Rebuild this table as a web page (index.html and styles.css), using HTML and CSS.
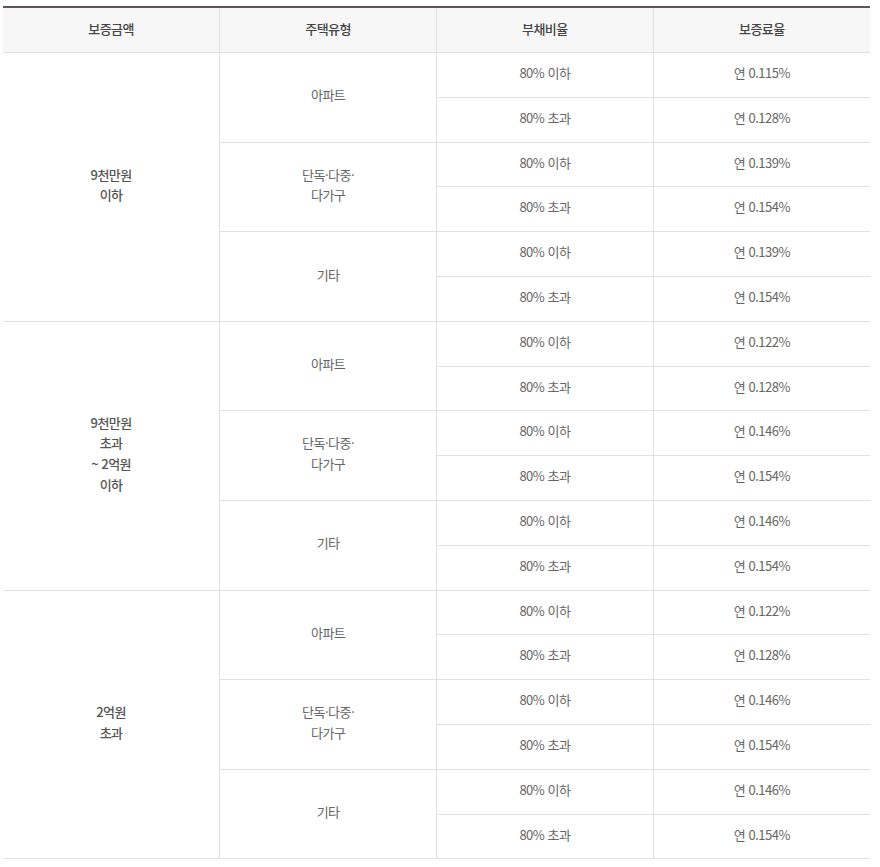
FILE: index.html
```html
<!DOCTYPE html>
<html lang="ko">
<head>
<meta charset="utf-8">
<link rel="stylesheet" href="styles.css">
</head>
<body>
<table class="rate-table">
  <colgroup><col><col><col><col></colgroup>
  <thead>
    <tr><th>보증금액</th><th>주택유형</th><th>부채비율</th><th>보증료율</th></tr>
  </thead>
  <tbody>
    <tr><td class="amt" rowspan="6">9천만원<br>이하</td><td rowspan="2">아파트</td><td>80% 이하</td><td>연 0.115%</td></tr>
    <tr><td>80% 초과</td><td>연 0.128%</td></tr>
    <tr><td rowspan="2">단독·다중·<br>다가구</td><td>80% 이하</td><td>연 0.139%</td></tr>
    <tr><td>80% 초과</td><td>연 0.154%</td></tr>
    <tr><td rowspan="2">기타</td><td>80% 이하</td><td>연 0.139%</td></tr>
    <tr><td>80% 초과</td><td>연 0.154%</td></tr>

    <tr><td class="amt" rowspan="6">9천만원<br>초과<br>~ 2억원<br>이하</td><td rowspan="2">아파트</td><td>80% 이하</td><td>연 0.122%</td></tr>
    <tr><td>80% 초과</td><td>연 0.128%</td></tr>
    <tr><td rowspan="2">단독·다중·<br>다가구</td><td>80% 이하</td><td>연 0.146%</td></tr>
    <tr><td>80% 초과</td><td>연 0.154%</td></tr>
    <tr><td rowspan="2">기타</td><td>80% 이하</td><td>연 0.146%</td></tr>
    <tr><td>80% 초과</td><td>연 0.154%</td></tr>

    <tr><td class="amt" rowspan="6">2억원<br>초과</td><td rowspan="2">아파트</td><td>80% 이하</td><td>연 0.122%</td></tr>
    <tr><td>80% 초과</td><td>연 0.128%</td></tr>
    <tr><td rowspan="2">단독·다중·<br>다가구</td><td>80% 이하</td><td>연 0.146%</td></tr>
    <tr><td>80% 초과</td><td>연 0.154%</td></tr>
    <tr><td rowspan="2">기타</td><td>80% 이하</td><td>연 0.146%</td></tr>
    <tr><td>80% 초과</td><td>연 0.154%</td></tr>
  </tbody>
</table>
</body>
</html>
```
FILE: styles.css
```css
html, body {
  margin: 0;
  padding: 0;
  background: #fff;
}
body {
  padding: 6px 0 0 3px;
  font-family: "Noto Sans CJK KR", "Noto Sans", sans-serif;
}
.rate-table {
  width: 867px;
  border-collapse: collapse;
  table-layout: fixed;
  border-top: 2px solid #5e5656;
  font-size: 13px;
  letter-spacing: -0.5px;
}
.rate-table col {
  width: 25%;
}
.rate-table th {
  background: #f7f7f7;
  color: #444;
  font-weight: 500;
  height: 42px;
  padding: 0 0 2px;
  text-align: center;
  vertical-align: middle;
  border-bottom: 1px solid #e1e1e1;
  border-left: 1px solid #e1e1e1;
  line-height: 20.8px;
}
.rate-table th:first-child {
  border-left: none;
}
.rate-table td {
  color: #666;
  font-weight: 400;
  text-align: center;
  vertical-align: middle;
  padding: 10px 0 13px;
  line-height: 20.8px;
  border-bottom: 1px solid #e1e1e1;
  border-left: 1px solid #e1e1e1;
}
.rate-table td.amt {
  border-left: none;
  color: #555;
  font-weight: 500;
}
```
